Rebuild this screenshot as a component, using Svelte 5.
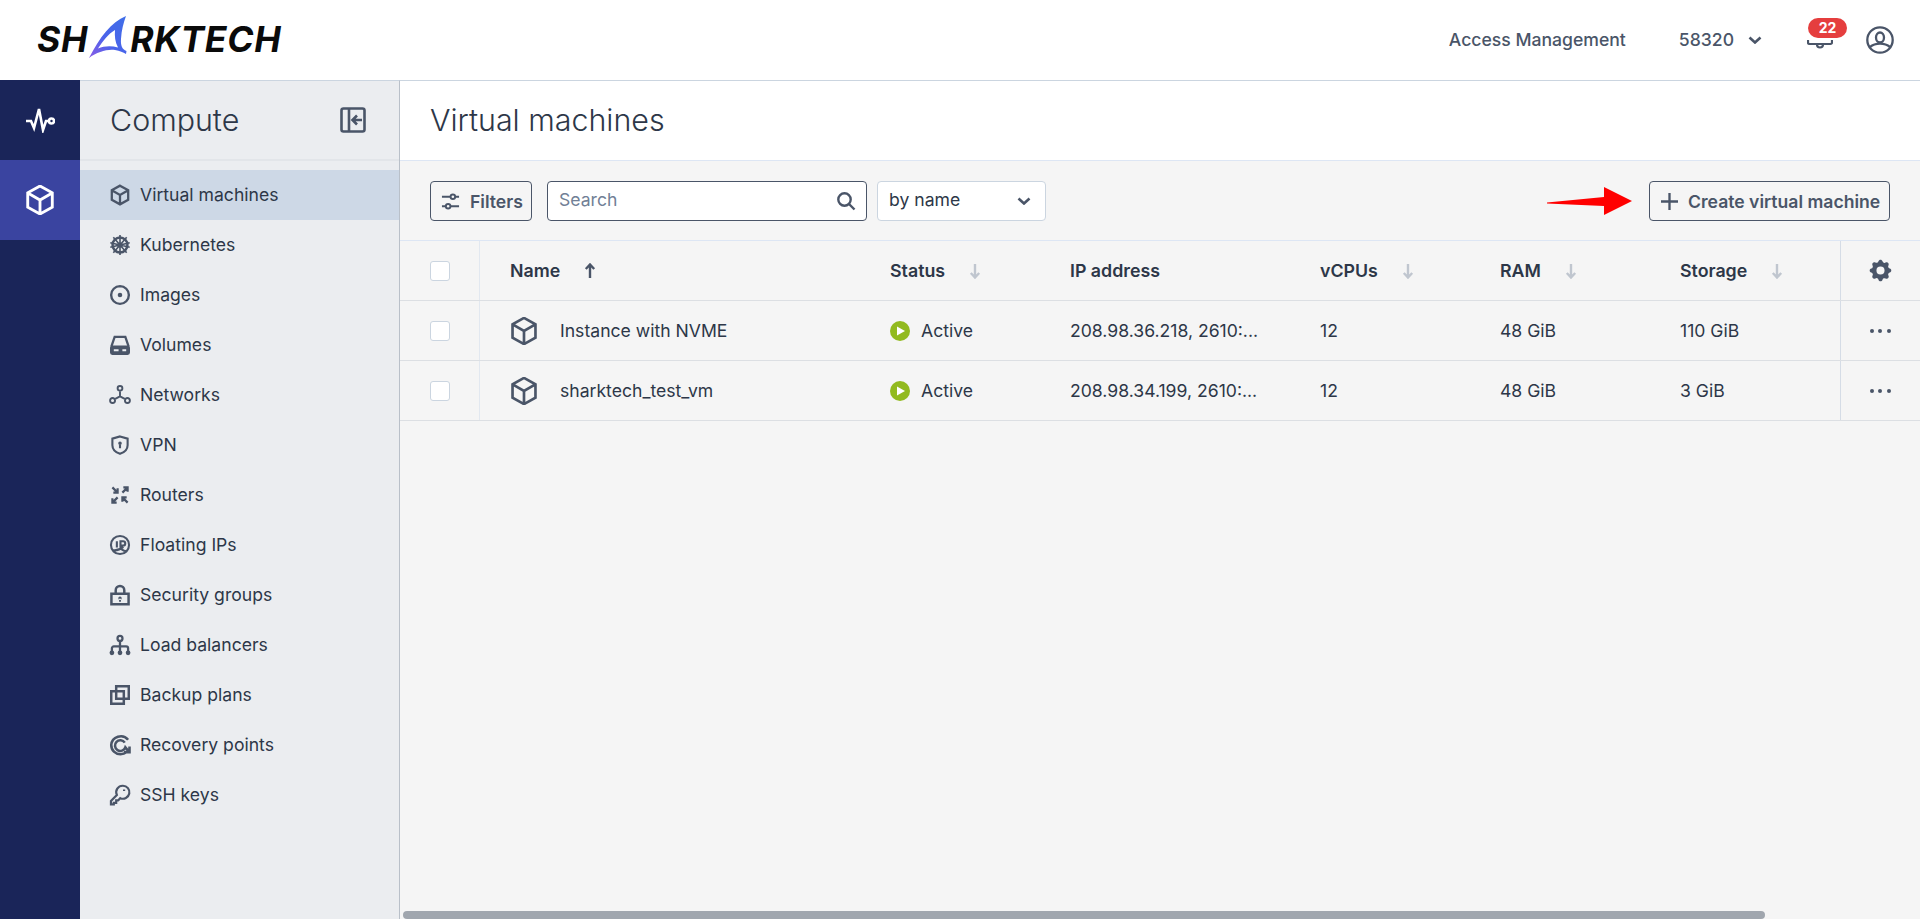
<script>
  const cube = 'M12 2.2 20.6 7v10L12 21.8 3.4 17V7zM3.8 7.2 12 12l8.2-4.8M12 12v9.6';
  const nav = [
    { label: 'Virtual machines', active: true, s: cube, w: 2.4 },
    { label: 'Kubernetes', s: 'M12 4.2a7.8 7.8 0 1 0 0 15.600 7.8 7.8 0 0 0 0-15.600z', w: 2.6, s2: 'M12 1.500v21M1.800 9.700l20.400 4.600M22.200 9.700 1.800 14.300M5 3.800l14 16.400M19 3.800 5 20.200', w2: 1.7, f: 'M12 9.300a2.700 2.700 0 1 0 0 5.400 2.700 2.700 0 0 0 0-5.400z' },
    { label: 'Images', s: 'M12 2.700a9.300 9.300 0 1 0 0 18.600 9.300 9.300 0 0 0 0-18.600z', w: 2.5, f: 'M12 9.600a2.400 2.400 0 1 0 0 4.800 2.400 2.400 0 0 0 0-4.800z' },
    { label: 'Volumes', s: 'M3 13.500 6.400 3.400h11.200L21 13.500', w: 2.4, f: 'M4 12.500h16a2.500 2.500 0 0 1 2.500 2.500v5a2.500 2.500 0 0 1-2.500 2.500H4A2.500 2.500 0 0 1 1.500 20v-5A2.500 2.500 0 0 1 4 12.500zM5.500 16.500v2h5v-2zM14.500 16.500v2h4v-2z', eo: true },
    { label: 'Networks', s: 'M12 2.500a2.500 2.500 0 1 0 0 5 2.500 2.500 0 0 0 0-5zM12 7.500v6M12 13.500l-6 3M12 13.500l6 3M4.200 15.200a2.600 2.600 0 1 0 0 5.200 2.600 2.600 0 0 0 0-5.200zM19.800 15.200a2.600 2.600 0 1 0 0 5.200 2.600 2.600 0 0 0 0-5.200z', w: 2 },
    { label: 'VPN', s: 'M12 3 20 5.300v6.900c0 4.600-3.500 7.500-8 9.100-4.500-1.600-8-4.500-8-9.100V5.300zM12 11.500v4', w: 2.200, f: 'M12 8.300a1.900 1.900 0 1 0 0 3.800 1.900 1.900 0 0 0 0-3.800z' },
    { label: 'Routers', s: 'M4 4l5.500 5.500M9.500 5v4.500H5M14.500 9.500 20 4M15.500 4H20v4.500M9.500 14.500 4 20M4 15.500V20h4.500M20 20l-5.500-5.500M14.500 19v-4.500H19', w: 2.3 },
    { label: 'Floating IPs', s: 'M12 2.500a9.500 9.500 0 1 0 0 19 9.500 9.500 0 0 0 0-19zM8.700 8v6.500M12.500 15V8h2.700a2.300 2.300 0 0 1 0 4.600h-2.700M4.500 17.500c3 .5 8-1 11-3.500M13 16c2 1.500 4 2.500 6 2.500', w: 2.2 },
    { label: 'Security groups', s: 'M3 10.700h18v11H3zM7.500 10.700V7a4.500 4.500 0 0 1 9 0v3.700', w: 2.6, f: 'M12 13.700a1.800 1.800 0 1 0 0 3.600 1.800 1.800 0 0 0 0-3.600zM11 16h2v3h-2z' },
    { label: 'Load balancers', s: 'M12 2.500a2.600 2.600 0 1 0 0 5.200 2.600 2.600 0 0 0 0-5.200zM12 7.700V20M3.500 20v-4.500a2 2 0 0 1 2-2h13a2 2 0 0 1 2 2V20', w: 2.4, f: 'M3.500 17.700a2.500 2.500 0 1 0 0 5 2.500 2.500 0 0 0 0-5zM12 17.700a2.500 2.500 0 1 0 0 5 2.500 2.500 0 0 0 0-5zM20.500 17.700a2.500 2.500 0 1 0 0 5 2.500 2.500 0 0 0 0-5z' },
    { label: 'Backup plans', s: 'M8 2.800h13.200V16H8zM8 8h8v8H8zM16 8H2.800v13.200H16V16', w: 2.6 },
    { label: 'Recovery points', s: 'M20.500 6.500A10 10 0 0 0 2.800 12c0 5.600 4.300 9.700 9.700 9.700 2.500 0 4.700-.8 6.500-2.300M17 9.500a5.600 5.600 0 1 0 .6 5l4 4.700M22 13.500v6h-6', w: 2.7 },
    { label: 'SSH keys', s: 'M15 2.300a6.800 6.800 0 1 1-2.700 13L10 17.700H8v2.500H5.500v1.600H2.500v-3.600L8.700 12A6.800 6.800 0 0 1 15 2.300zM16.300 6.200v1.700', w: 2.3 }
  ];
  const columns = [
    { label: 'Status' }, { label: 'IP address', plain: true }, { label: 'vCPUs' }, { label: 'RAM' }, { label: 'Storage' }
  ];
  const rows = [
    { name: 'Instance with NVME', ip: '208.98.36.218, 2610:...', cpus: '12', ram: '48 GiB', storage: '110 GiB' },
    { name: 'sharktech_test_vm', ip: '208.98.34.199, 2610:...', cpus: '12', ram: '48 GiB', storage: '3 GiB' }
  ];
</script>

<div class="page">
  <header class="top">
    <div class="logo">
      <span class="logo-text">SH</span>
      <svg class="fin" viewBox="0 0 42 44" aria-hidden="true">
        <defs>
          <linearGradient id="fing" x1="1" y1="0" x2="0" y2="1">
            <stop offset="0" stop-color="#3f6fe8" />
            <stop offset=".55" stop-color="#4a63ea" />
            <stop offset="1" stop-color="#8a5ce6" />
          </linearGradient>
        </defs>
        <path fill="url(#fing)" fill-rule="evenodd" d="M39 1C24 7 13 22 2 43 10 37 20 34 28 35 33 36 36 37 39 39L39.500 36C35 34.500 33.500 30 34 24 34.500 15 36.500 8 39 1ZM28 15C27.500 21 28 27 31 32.500 24 30.500 17 31 11 33.500 16 26 21 19 28 15Z" />
      </svg>
      <span class="logo-text">RKTECH</span>
    </div>
    <div class="top-right">
      <span class="access">Access Management</span>
      <span class="account">58320</span>
      <svg class="chev" viewBox="0 0 14 8"><path d="M1.500 1.500 7 6.500l5.500-5" /></svg>
      <div class="bell">
        <svg viewBox="0 0 26 12"><path d="M1 1v2.500a1.500 1.500 0 0 0 1.500 1.500h21A1.500 1.500 0 0 0 25 3.500V1M10 5.500a3 3 0 0 0 6 0" /></svg>
        <span class="badge">22</span>
      </div>
      <svg class="user" viewBox="0 0 28 28"><circle cx="14" cy="14" r="12.700" /><ellipse cx="14" cy="11.500" rx="4" ry="5" /><path d="M4 21c3-2.500 5-3.300 10-3.300s7 .8 10 3.300" /></svg>
    </div>
  </header>

  <div class="body">
    <aside class="rail">
      <div class="rail-item">
        <svg class="pulse" viewBox="0 0 30 26"><path d="M1 14h5l3 7 5-19 4 21 3-9h4" /><circle cx="26.500" cy="14" r="2.500" /></svg>
      </div>
      <div class="rail-item on">
        <svg class="railcube" viewBox="1.500 1.500 21 21"><path d={cube} /></svg>
      </div>
    </aside>

    <nav class="side">
      <div class="side-head">
        <span class="side-title">Compute</span>
        <svg class="collapse" viewBox="0 0 26 26"><rect x="1.500" y="1.500" width="23" height="23" rx="2" /><path d="M9 1.500v23M22 13h-9M17 8.500 12.500 13l4.500 4.500" /></svg>
      </div>
      <ul class="nav">
        {#each nav as item}
          <li class="nav-item" class:active={item.active}>
            <svg class="nav-icon" viewBox="1.500 1.500 21 21" aria-hidden="true">
              {#if item.f}<path class="solid" fill-rule={item.eo ? 'evenodd' : 'nonzero'} d={item.f} />{/if}
              {#if item.s2}<path d={item.s2} stroke-width={item.w2} />{/if}
              <path d={item.s} stroke-width={item.w} />
            </svg>
            <span class="nav-label">{item.label}</span>
          </li>
        {/each}
      </ul>
    </nav>

    <main class="main">
      <div class="title-bar"><h1>Virtual machines</h1></div>
      <div class="toolbar">
        <button class="btn filters">
          <svg class="btn-icon" viewBox="0 0 20 20"><path d="M1 5h9M15 5h4M1 15h4M10 15h9" /><circle cx="12.500" cy="5" r="2.400" /><circle cx="7.500" cy="15" r="2.400" /></svg>
          Filters
        </button>
        <div class="search">
          <span>Search</span>
          <svg viewBox="0 0 20 20"><circle cx="8.500" cy="8.500" r="6.200" /><path d="m13 13 5.500 5.500" /></svg>
        </div>
        <div class="select">
          <span>by name</span>
          <svg class="chev small" viewBox="0 0 14 8"><path d="M1.500 1.500 7 6.500l5.500-5" /></svg>
        </div>
        <div class="grow"></div>
        <div class="arrow-wrap">
          <svg class="red-arrow" viewBox="0 0 85 28"><path d="M0 15.500 57 10V0L85 14 57 28V19L0 16.500z" /></svg>
        </div>
        <button class="btn create">
          <svg class="btn-icon" viewBox="0 0 16 16"><path d="M8 0v16M0 8h16" /></svg>
          Create virtual machine
        </button>
      </div>

      <div class="tr head">
        <div class="cell check"><span class="box"></span></div>
        <div class="cell name"><b>Name</b><svg class="sort dark" viewBox="0 0 12 16"><path d="M6 15V2M1.800 6 6 1.500 10.200 6" /></svg></div>
        {#each columns as c}
          <div class="cell"><b>{c.label}</b>{#if !c.plain}<svg class="sort" viewBox="0 0 12 16"><path d="M6 1v13M1.800 10 6 14.500 10.200 10" /></svg>{/if}</div>
        {/each}
        <div class="cell actions">
          <svg class="gear" viewBox="0 0 20 20"><path fill-rule="evenodd" d="M11.490 3.170c-.38-1.560-2.600-1.560-2.980 0a1.532 1.532 0 01-2.286.948c-1.372-.836-2.942.734-2.106 2.106.54.886.061 2.042-.947 2.287-1.561.379-1.561 2.600 0 2.978a1.532 1.532 0 01.947 2.287c-.836 1.372.734 2.942 2.106 2.106a1.532 1.532 0 012.287.947c.379 1.561 2.600 1.561 2.978 0a1.533 1.533 0 012.287-.947c1.372.836 2.942-.734 2.106-2.106a1.533 1.533 0 01.947-2.287c1.561-.379 1.561-2.600 0-2.978a1.532 1.532 0 01-.947-2.287c.836-1.372-.734-2.942-2.106-2.106a1.532 1.532 0 01-2.287-.947zM10 13a3 3 0 100-6 3 3 0 000 6z" /></svg>
        </div>
      </div>

      {#each rows as r}
        <div class="tr">
          <div class="cell check"><span class="box"></span></div>
          <div class="cell name">
            <svg class="vm" viewBox="1.500 1.500 21 21"><path d={cube} /></svg>
            <span>{r.name}</span>
          </div>
          <div class="cell">
            <svg class="play" viewBox="0 0 20 20"><circle cx="10" cy="10" r="10" /><path d="M7 5.500 15 10l-8 4.500z" /></svg>
            <span>Active</span>
          </div>
          <div class="cell">{r.ip}</div>
          <div class="cell">{r.cpus}</div>
          <div class="cell">{r.ram}</div>
          <div class="cell">{r.storage}</div>
          <div class="cell actions"><span class="dots"><i></i><i></i><i></i></span></div>
        </div>
      {/each}

      <div class="scroll-track"><div class="scroll-thumb"></div></div>
    </main>
  </div>
</div>

<style>
  :global(body) {
    margin: 0;
    font-family: Inter, "Liberation Sans", sans-serif;
    color: #2d3748;
    overflow: hidden;
  }
  .page {
    height: 100vh;
    display: flex;
    flex-direction: column;
  }
  svg {
    display: block;
    flex: none;
  }
  .top {
    height: 80px;
    background: #fff;
    display: flex;
    align-items: center;
    justify-content: space-between;
    padding: 0 26px 0 37px;
    flex: none;
  }
  .logo {
    display: flex;
    align-items: center;
    height: 60px;
  }
  .logo-text {
    font-size: 35.5px;
    font-weight: 700;
    font-style: italic;
    letter-spacing: 0.7px;
    color: #0a0a0a;
    line-height: 1;
  }
  .fin {
    width: 42px;
    height: 44px;
    margin: -6px 1px 0 -1px;
    fill: none;
  }
  .top-right {
    display: flex;
    align-items: center;
  }
  .access {
    font-size: 17.6px;
    font-weight: 500;
    color: #4a5568;
    margin-right: 53px;
    padding-bottom: 2px;
  }
  .account {
    font-size: 17.6px;
    font-weight: 500;
    color: #4a5568;
    margin-right: 14px;
    padding-bottom: 2px;
  }
  .chev {
    width: 14px;
    height: 8px;
    fill: none;
    stroke: #4a5568;
    stroke-width: 2.6;
    margin-right: 45px;
  }
  .chev.small {
    margin-right: 0;
  }
  .bell {
    position: relative;
    width: 26px;
    height: 12px;
    margin-top: 10px;
    margin-right: 33px;
  }
  .bell svg {
    width: 26px;
    height: 12px;
    fill: none;
    stroke: #4a5568;
    stroke-width: 2.2;
  }
  .badge {
    position: absolute;
    left: 1px;
    top: -21px;
    width: 39px;
    height: 20px;
    border-radius: 10px;
    background: #e53e3e;
    color: #fff;
    font-size: 14px;
    font-weight: 700;
    line-height: 20px;
    text-align: center;
  }
  .user {
    width: 28px;
    height: 28px;
    fill: none;
    stroke: #4a5568;
    stroke-width: 2.3;
  }
  .body {
    flex: 1;
    min-height: 0;
    display: flex;
  }
  .rail {
    width: 80px;
    flex: none;
    background: #1a2559;
  }
  .rail-item {
    height: 80px;
    display: flex;
    align-items: center;
    justify-content: center;
  }
  .rail-item.on {
    background: #3a44a0;
  }
  .pulse {
    width: 30px;
    height: 26px;
    fill: none;
    stroke: #fff;
    stroke-width: 2.6;
  }
  .railcube {
    width: 30px;
    height: 30px;
    fill: none;
    stroke: #fff;
    stroke-width: 2;
  }
  .side {
    width: 320px;
    flex: none;
    box-sizing: border-box;
    background: #ebedf0;
    border-top: 1px solid #cbd5e0;
    border-right: 1px solid #b9c0c9;
  }
  .side-head {
    height: 80px;
    box-sizing: border-box;
    border-bottom: 2px solid #e2e5e9;
    display: flex;
    align-items: center;
    justify-content: space-between;
    padding: 0 33px 0 30px;
  }
  .side-title {
    font-size: 30.4px;
    font-weight: 300;
    color: #2d3748;
  }
  .collapse {
    width: 26px;
    height: 26px;
    fill: none;
    stroke: #4a5568;
    stroke-width: 2.6;
  }
  .nav {
    list-style: none;
    margin: 0;
    padding: 9px 0 0;
  }
  .nav-item {
    height: 50px;
    display: flex;
    align-items: center;
    gap: 10px;
    padding-left: 30px;
    font-size: 17.6px;
    font-weight: 400;
    color: #2d3748;
  }
  .nav-label {
    padding-bottom: 2px;
  }
  .nav-item.active {
    background: #cdd8e6;
  }
  .nav-icon {
    width: 20px;
    height: 20px;
    fill: none;
    stroke: #4a5568;
    overflow: visible;
  }
  .nav-icon .solid {
    fill: #4a5568;
    stroke: none;
  }
  .main {
    flex: 1;
    min-width: 0;
    background: #f5f5f5;
    display: flex;
    flex-direction: column;
    position: relative;
  }
  .title-bar {
    height: 81px;
    box-sizing: border-box;
    background: #fff;
    border-top: 1px solid #cbd5e0;
    border-bottom: 1px solid #dde6f4;
    padding: 0 0 2px 30px;
    display: flex;
    align-items: center;
    flex: none;
  }
  h1 {
    margin: 0;
    font-size: 30.4px;
    font-weight: 300;
    color: #2d3748;
  }
  .toolbar {
    height: 80px;
    box-sizing: border-box;
    border-bottom: 1px solid #dde6f4;
    display: flex;
    align-items: center;
    padding: 1px 30px 0;
    flex: none;
  }
  .btn {
    height: 40px;
    box-sizing: border-box;
    border: 1px solid #4a5568;
    border-radius: 4px;
    background: transparent;
    font: 600 17.6px Inter, sans-serif;
    color: #4a5568;
    display: flex;
    align-items: center;
    padding: 0;
  }
  .btn-icon {
    fill: none;
    stroke: #4a5568;
  }
  .filters {
    width: 102px;
    margin-right: 15px;
    gap: 10px;
    padding-left: 10px;
  }
  .filters .btn-icon {
    width: 19px;
    height: 19px;
    stroke-width: 2;
  }
  .create {
    width: 241px;
    gap: 10px;
    padding-left: 11px;
  }
  .create .btn-icon {
    width: 17px;
    height: 17px;
    stroke-width: 2.2;
  }
  .search {
    width: 320px;
    height: 40px;
    box-sizing: border-box;
    border: 1px solid #4a5568;
    border-radius: 4px;
    background: #fff;
    display: flex;
    align-items: center;
    justify-content: space-between;
    padding: 0 10px 3px 11px;
    font-size: 17.6px;
    color: #718096;
    margin-right: 10px;
  }
  .search svg {
    width: 20px;
    height: 20px;
    margin-top: 3px;
    fill: none;
    stroke: #4a5568;
    stroke-width: 2.4;
  }
  .select {
    width: 169px;
    height: 40px;
    box-sizing: border-box;
    border: 1px solid #cbd5e0;
    border-radius: 4px;
    background: #fff;
    display: flex;
    align-items: center;
    justify-content: space-between;
    padding: 0 14px 3px 11px;
    font-size: 17.6px;
    color: #2d3748;
  }
  .select svg {
    margin-top: 3px;
  }
  .grow {
    flex: 1;
  }
  .arrow-wrap {
    margin-right: 17px;
  }
  .red-arrow {
    width: 85px;
    height: 28px;
    fill: #ff0000;
  }
  .tr {
    display: grid;
    grid-template-columns: 80px 380px 180px 250px 180px 180px 190px 80px;
    height: 60px;
    box-sizing: border-box;
    border-bottom: 1px solid #dcdfe3;
    flex: none;
  }
  .tr:last-of-type {
    border-bottom-color: #dde6f4;
  }
  .cell {
    display: flex;
    align-items: center;
    padding-left: 30px;
    font-size: 17.6px;
    white-space: nowrap;
    min-width: 0;
    color: #2d3748;
  }
  .cell b {
    font-weight: 600;
    font-size: 17.8px;
  }
  .check {
    border-right: 1px solid #e2e8f0;
    box-sizing: border-box;
  }
  .box {
    width: 20px;
    height: 20px;
    box-sizing: border-box;
    background: #fff;
    border: 1px solid #cbd5e0;
    border-radius: 3px;
  }
  .sort {
    width: 12px;
    height: 16px;
    margin-left: 24px;
    fill: none;
    stroke: #c0c6cf;
    stroke-width: 2.4;
  }
  .sort.dark {
    stroke: #4a5568;
  }
  .vm {
    width: 28px;
    height: 28px;
    fill: none;
    stroke: #4a5568;
    stroke-width: 2;
    margin-right: 22px;
  }
  .play {
    width: 20px;
    height: 20px;
    margin-right: 11px;
  }
  .play circle {
    fill: #92ba1f;
  }
  .play path {
    fill: #fff;
  }
  .actions {
    border-left: 1px solid #d5dce6;
    padding-left: 0;
    padding-right: 1px;
    justify-content: center;
    box-sizing: border-box;
    overflow: visible;
  }
  .gear {
    width: 27px;
    height: 27px;
    fill: #4a5568;
  }
  .dots {
    display: flex;
    gap: 4.5px;
  }
  .dots i {
    width: 4px;
    height: 4px;
    border-radius: 50%;
    background: #4a5568;
  }
  .scroll-track {
    position: absolute;
    left: 3px;
    right: 0;
    bottom: 0;
    height: 8px;
  }
  .scroll-thumb {
    width: 1362px;
    height: 8px;
    border-radius: 4px;
    background: #a0a6ae;
  }
</style>
